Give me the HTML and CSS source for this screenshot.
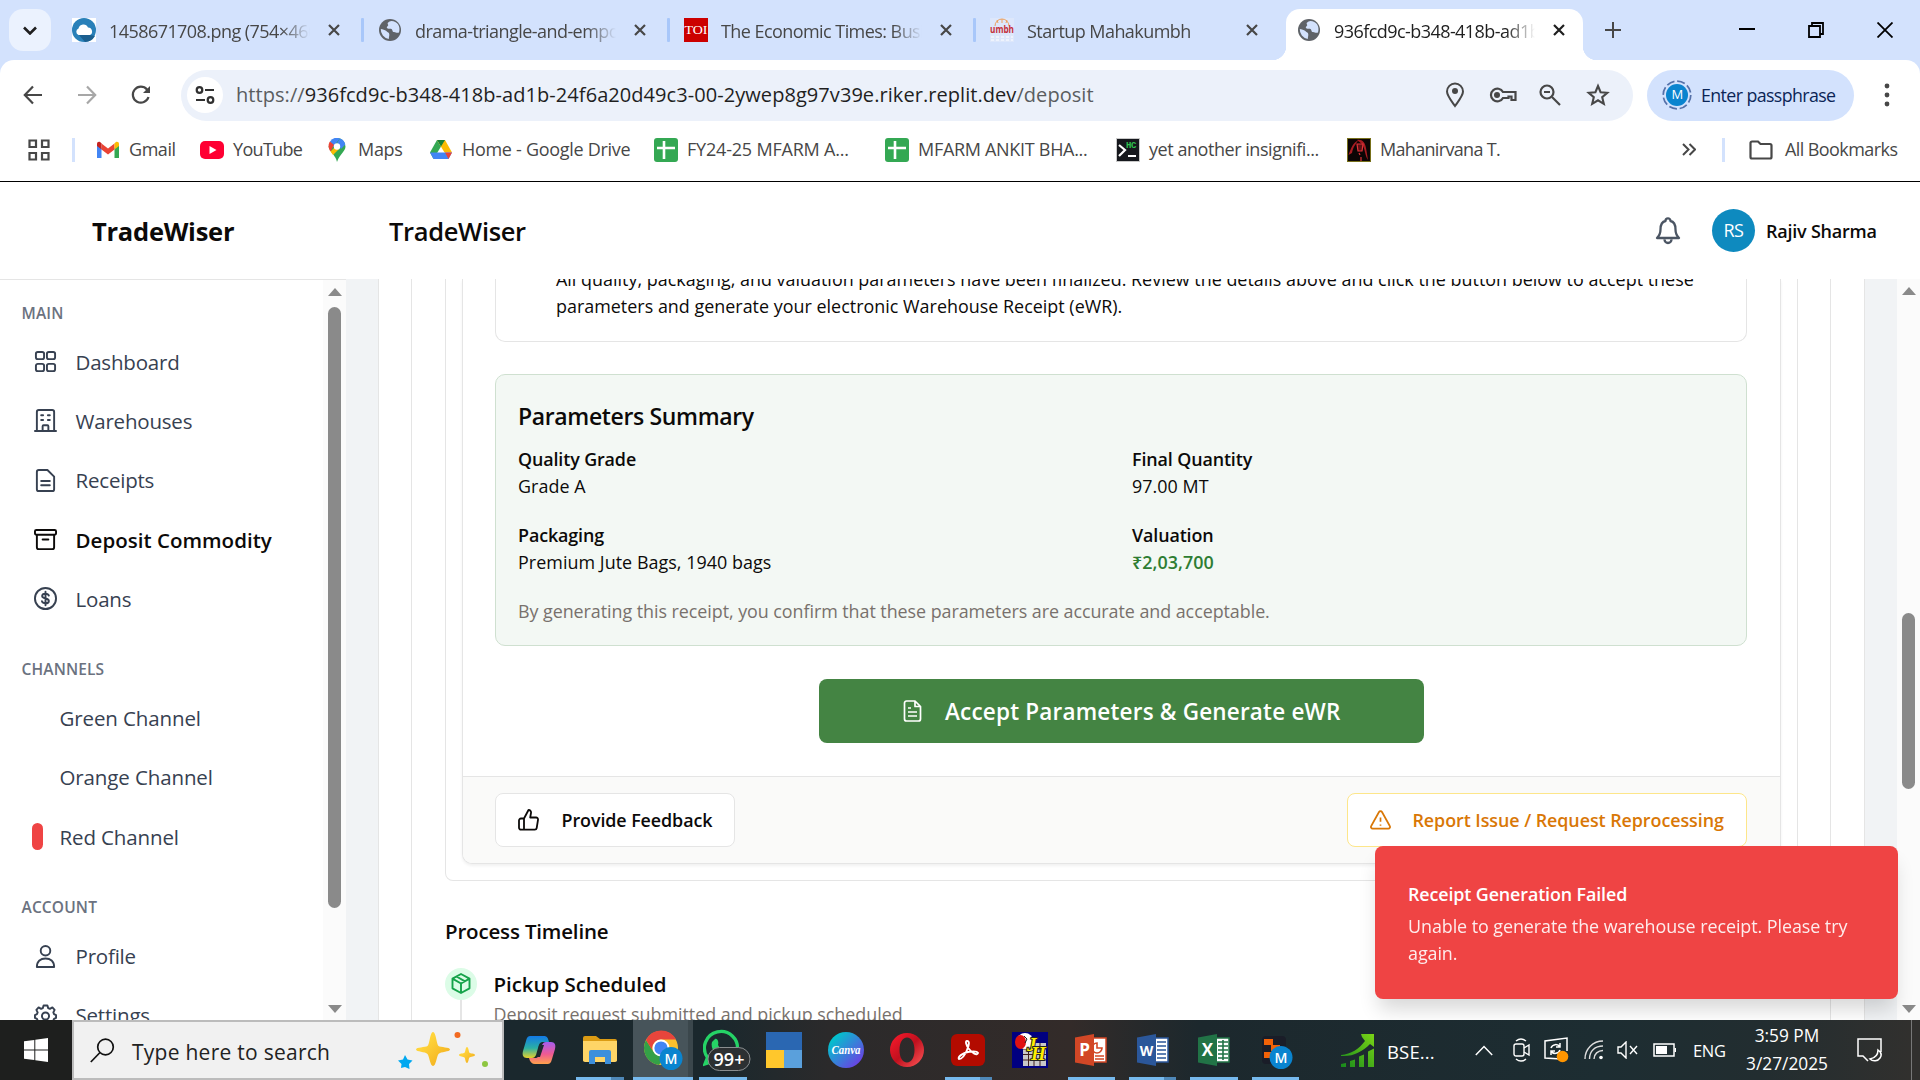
FILE: index.html
```html
<!DOCTYPE html>
<html lang="en">
<head>
<meta charset="utf-8">
<title>TradeWiser</title>
<link rel="stylesheet" href="styles.css">
</head>
<body>
<svg class="defs" width="0" height="0" aria-hidden="true">
  <defs>
    <symbol id="globe" viewBox="0 0 24 24"><circle cx="12" cy="12" r="11" fill="#5f6368"/><path d="M2.800 11c2 .5 4 .5 5.500 2s3 1.500 3 3.500-.5 2.500-.5 4.500A9.500 9.500 0 0 1 2.800 11zM13.500 3c-3 .5-4.500 2-3.500 3.500S8 8.500 9 10s3 0 4.500 1 .5 3 2.500 3 2.500 1.500 5 .5C23 8 19 3 13.500 3z" fill="#d3e2fd"/></symbol>
    <symbol id="x" viewBox="0 0 12 12"><path d="M1 1l10 10M11 1L1 11" stroke="currentColor" stroke-width="2.200" fill="none"/></symbol>
    <symbol id="sheet" viewBox="0 0 24 24"><rect width="24" height="24" rx="3" fill="#34a853"/><path d="M10 3v18M3 10h18" stroke="#fff" stroke-width="2.600"/></symbol>
    <linearGradient id="canvaG" x1="0" y1="0" x2="1" y2="1"><stop offset="0.150" stop-color="#00c4cc"/><stop offset="1" stop-color="#7d2ae8"/></linearGradient>
    <linearGradient id="gold" x1="0" y1="0" x2="1" y2="1"><stop offset="0.300" stop-color="#ffd43a"/><stop offset="1" stop-color="#f0a81a"/></linearGradient>
    <linearGradient id="copA" x1="0" y1="0" x2="0" y2="1"><stop offset="0" stop-color="#1279e6"/><stop offset="0.550" stop-color="#2bb0a4"/><stop offset="1" stop-color="#e8d12a"/></linearGradient>
    <linearGradient id="copB" x1="0" y1="0" x2="0" y2="1"><stop offset="0" stop-color="#a45df0"/><stop offset="0.550" stop-color="#ef5a92"/><stop offset="1" stop-color="#ffa24c"/></linearGradient>
    <linearGradient id="growth" x1="0" y1="1" x2="1" y2="0"><stop offset="0" stop-color="#178a1c"/><stop offset="1" stop-color="#7ad416"/></linearGradient>
    <linearGradient id="operaG" x1="0" y1="0" x2="1" y2="1"><stop offset="0" stop-color="#ff1b2d"/><stop offset="0.500" stop-color="#c0101e"/><stop offset="1" stop-color="#ff5a5a"/></linearGradient>
  </defs>
</svg>

<header class="browser">
  <div class="tabstrip">
    <div class="tab-search"><svg width="14" height="9" viewBox="0 0 14 9"><path d="M1 1.500l6 6 6-6" fill="none" stroke="#1f1f1f" stroke-width="2.600"/></svg></div>
    <div class="tab">
      <svg width="24" height="24" viewBox="0 0 24 24"><rect width="24" height="24" fill="#fff"/><circle cx="12" cy="12" r="12" fill="#2980b9"/><path d="M18 17l5 1a12 12 0 0 1-10 6l-6-7z" fill="#1b5f8f"/><path d="M6.500 17a3.500 3.500 0 0 1 0-6.500 5 5 0 0 1 9.500-1 4 4 0 0 1 2 7.500z" fill="#fff"/></svg>
      <span class="tab-title">1458671708.png (754×460)</span><svg class="tab-x" width="12" height="12"><use href="#x"/></svg>
    </div>
    <div class="tab">
      <svg width="24" height="24"><use href="#globe"/></svg>
      <span class="tab-title">drama-triangle-and-empower</span><svg class="tab-x" width="12" height="12"><use href="#x"/></svg>
    </div>
    <div class="tab">
      <svg width="24" height="24" viewBox="0 0 24 24"><rect width="24" height="24" fill="#c00"/><text x="12" y="16" text-anchor="middle" class="toi" textLength="23" lengthAdjust="spacingAndGlyphs">TOI</text></svg>
      <span class="tab-title">The Economic Times: Business</span><svg class="tab-x" width="12" height="12"><use href="#x"/></svg>
    </div>
    <div class="tab last">
      <svg width="24" height="24" viewBox="0 0 24 24"><rect width="24" height="24" fill="#dde7fb"/><path d="M5 8a7 7 0 0 1 14 0M12 1v4M7 2l1 3M17 2l-1 3" stroke="#eda05e" stroke-width="1" fill="none"/><text x="12" y="15" text-anchor="middle" class="umbh" textLength="24" lengthAdjust="spacingAndGlyphs">umbh</text><path d="M1 19h22M1 22h22" stroke="#fff" stroke-dasharray="3 2"/></svg>
      <span class="tab-title">Startup Mahakumbh</span><svg class="tab-x" width="12" height="12"><use href="#x"/></svg>
    </div>
    <div class="tab active">
      <svg width="24" height="24"><use href="#globe"/></svg>
      <span class="tab-title">936fcd9c-b348-418b-ad1b-24f</span><svg class="tab-x" width="12" height="12"><use href="#x"/></svg>
    </div>
    <svg class="newtab" width="16" height="16" viewBox="0 0 16 16"><path d="M8 0v16M0 8h16" stroke="#474747" stroke-width="2"/></svg>
    <div class="winctl">
      <svg width="16" height="16" viewBox="0 0 16 16"><path d="M0 7h16" stroke="#000" stroke-width="2"/></svg>
      <svg width="16" height="16" viewBox="0 0 16 16"><path d="M1 4h11v11H1zM4 4V1h11v11h-3" fill="none" stroke="#000" stroke-width="1.800"/></svg>
      <svg width="16" height="16" viewBox="0 0 16 16"><path d="M.5.500l15 15M15.500.500l-15 15" stroke="#000" stroke-width="1.800"/></svg>
    </div>
  </div>

  <div class="toolbar">
    <svg class="tb" width="20" height="20" viewBox="0 0 20 20"><path d="M19 10H2M10 1.500L1.800 10l8.200 8.500" fill="none" stroke="#474747" stroke-width="2.200"/></svg>
    <svg class="tb" width="20" height="20" viewBox="0 0 20 20"><path d="M1 10h17M10 1.500l8.200 8.500-8.200 8.500" fill="none" stroke="#a7a7a7" stroke-width="2.200"/></svg>
    <svg class="tb" width="20" height="20" viewBox="0 0 20 20"><path d="M17.500 12A8 8 0 1 1 16 4.500l2 2.500" fill="none" stroke="#474747" stroke-width="2.200"/><path d="M19 1v7h-7z" fill="#474747"/></svg>
    <div class="omnibox">
      <span class="site"><svg width="20" height="20" viewBox="0 0 20 20" fill="none" stroke="#303030" stroke-width="2.200"><circle cx="4.500" cy="5" r="2.800"/><path d="M10 5h9M1 15h9"/><circle cx="15.500" cy="15" r="2.800"/></svg></span>
      <span class="url"><i>https://</i>936fcd9c-b348-418b-ad1b-24f6a20d49c3-00-2ywep8g97v39e.riker.replit.dev<i>/deposit</i></span>
      <div class="omni-icons">
        <svg width="24" height="26" viewBox="0 0 24 26" fill="none" stroke="#474747" stroke-width="2"><path d="M12 24C7 17 4 13.500 4 9.500a8 8 0 0 1 16 0C20 13.500 17 17 12 24z"/><circle cx="12" cy="9" r="3" fill="#474747" stroke="none"/></svg>
        <svg width="28" height="18" viewBox="0 0 28 18" fill="none" stroke="#474747" stroke-width="2.200"><path d="M14 6h12.500v8h-4v-3.500h-3V12H14a6.400 6.400 0 1 1 0-6z"/><circle cx="8" cy="9" r="3" fill="#474747" stroke="none"/></svg>
        <svg width="22" height="22" viewBox="0 0 22 22" fill="none" stroke="#474747" stroke-width="2.200"><circle cx="8" cy="8" r="6.500"/><path d="M13 13l8 8M5 8h6"/></svg>
        <svg class="star" width="24" height="24" viewBox="0 0 24 24" fill="none" stroke="#474747" stroke-width="2.100"><path d="M12 3l2.600 6.200 6.700.6-5.100 4.400 1.600 6.600L12 17.300l-5.800 3.500 1.600-6.600-5.100-4.400 6.700-.6z"/></svg>
      </div>
    </div>
    <div class="profile-chip">
      <svg width="30" height="30" viewBox="0 0 30 30"><circle cx="15" cy="15" r="13.800" fill="none" stroke="#5570a8" stroke-width="1.700" stroke-dasharray="8 2.800"/><circle cx="15" cy="15" r="11" fill="#0a84cf"/><text x="15" y="19" text-anchor="middle" class="m">M</text></svg>
      <span>Enter passphrase</span>
    </div>
    <svg class="menu" width="6" height="24" viewBox="0 0 6 24" fill="#474747"><circle cx="3" cy="3" r="2.400"/><circle cx="3" cy="12" r="2.400"/><circle cx="3" cy="21" r="2.400"/></svg>
  </div>

  <div class="bookmarks">
    <svg width="22" height="22" viewBox="0 0 22 22" fill="none" stroke="#474747" stroke-width="2.200"><path d="M1.500 1.500h6.500v6.500H1.500zM14 1.500h6.500v6.500H14zM1.500 14h6.500v6.500H1.500zM14 14h6.500v6.500H14z"/></svg>
    <span class="sep"></span>
    <div class="bm tight"><svg width="24" height="18" viewBox="0 0 24 18"><path d="M1 3v14h4.500V7z" fill="#4285f4"/><path d="M23 3v14h-4.500V7z" fill="#34a853"/><path d="M5.500 2.500L12 7.500l6.500-5V8.500L12 13.500l-6.500-5z" fill="#ea4335"/><path d="M1 3C1 .5 4 0 5.500 2.500v6L1 5z" fill="#c5221f"/><path d="M23 3c0-2.500-3-3-4.500-.5v6L23 5z" fill="#fbbc04"/></svg><span>Gmail</span></div>
    <div class="bm tighter"><svg width="24" height="18" viewBox="0 0 24 18"><rect width="24" height="18" rx="5" fill="#ff0033"/><path d="M9.500 5l7 4-7 4z" fill="#fff"/></svg><span>YouTube</span></div>
    <div class="bm"><svg width="18" height="24" viewBox="0 0 18 24"><path d="M9 0a8.500 8.500 0 0 1 8.500 8.500c0 5-5.500 7-8.500 15.500C8 18 2 14 .5 8.500z" fill="#34a853"/><path d="M2 3.500A8.500 8.500 0 0 1 12 .5L5 9z" fill="#4285f4"/><path d="M2 3.500L6 7l-3.500 6.500C0 10 0 6 2 3.500z" fill="#ea4335"/><path d="M12 .5c3 1 5 3.500 5.300 6L13 11 9 5z" fill="#4285f4"/><path d="M2.500 13.500L7 9l4 2-6 6z" fill="#fbbc04"/><circle cx="9" cy="8.500" r="3.200" fill="#fff"/></svg><span>Maps</span></div>
    <div class="bm"><svg width="24" height="21" viewBox="0 0 24 21"><path d="M8 1L1 13.500l3.500 6.500L12 7.500z" fill="#34a853"/><path d="M8 1h8l7 12.500h-7.500z" fill="#fbbc04"/><path d="M8 1h8l-4 6.500z" fill="#188038"/><path d="M1 13.500h22L19.500 20h-15z" fill="#4285f4"/><path d="M16 13.500h7L19.500 20z" fill="#ea4335"/></svg><span>Home - Google Drive</span></div>
    <div class="bm fy"><svg width="24" height="24"><use href="#sheet"/></svg><span>FY24-25 MFARM A...</span></div>
    <div class="bm"><svg width="24" height="24"><use href="#sheet"/></svg><span>MFARM ANKIT BHA...</span></div>
    <div class="bm tight"><svg width="24" height="24" viewBox="0 0 24 24"><rect x=".5" y=".5" width="23" height="23" fill="#16181d" stroke="#c9c9c9"/><path d="M3 7l6 5-6 6M12 18h8" fill="none" stroke="#fff" stroke-width="2.200"/><text x="10" y="10" class="hc">HC</text></svg><span>yet another insignifi...</span></div>
    <div class="bm tighter"><svg width="24" height="24" viewBox="0 0 24 24"><rect x=".5" y=".5" width="23" height="23" fill="#0c0505" stroke="#77701a"/><path d="M1.500 17C4 10 6 5 11 2.500 9 6 6 9 5 15zM10 2c5-1 8 2 9 8l2 12c-3-4-3-12-6-16z" fill="#a81c22"/><path d="M10 6h6l-1 7h-4zM12 15l1 2M14 19v4" fill="#5c1114" stroke="#e0343a" stroke-width="1.200"/></svg><span>Mahanirvana T.</span></div>
    <svg class="more" width="14" height="13" viewBox="0 0 14 13"><path d="M1 1l5.500 5.500L1 12M7.500 1L13 6.500 7.500 12" fill="none" stroke="#474747" stroke-width="2"/></svg>
    <span class="sep"></span>
    <div class="bm tighter all"><svg width="24" height="20" viewBox="0 0 24 20"><path d="M1.500 3a1.500 1.500 0 0 1 1.500-1.500h6L11.500 4H21a1.500 1.500 0 0 1 1.500 1.500V17a1.500 1.500 0 0 1-1.500 1.500H3A1.500 1.500 0 0 1 1.500 17z" fill="none" stroke="#474747" stroke-width="2.200"/></svg><span>All Bookmarks</span></div>
  </div>
</header>

<div class="app">
  <aside class="sidebar">
    <div class="brand">TradeWiser</div>
    <div class="side-body">
      <nav class="nav">
        <h3>MAIN</h3>
        <a><svg viewBox="0 0 24 24"><path d="M4 2h4.500a2 2 0 0 1 2 2v3.500a2 2 0 0 1-2 2H4a2 2 0 0 1-2-2V4a2 2 0 0 1 2-2zM15.500 2H20a2 2 0 0 1 2 2v3.500a2 2 0 0 1-2 2h-4.500a2 2 0 0 1-2-2V4a2 2 0 0 1 2-2zM4 14.500h4.500a2 2 0 0 1 2 2V20a2 2 0 0 1-2 2H4a2 2 0 0 1-2-2v-3.500a2 2 0 0 1 2-2zM15.500 14.500H20a2 2 0 0 1 2 2V20a2 2 0 0 1-2 2h-4.500a2 2 0 0 1-2-2v-3.500a2 2 0 0 1 2-2z"/></svg>Dashboard</a>
        <a><svg viewBox="0 0 24 24"><path d="M1 23h22M3 23V3a2 2 0 0 1 2-2h14a2 2 0 0 1 2 2v20M9 23v-5a1 1 0 0 1 1-1h4a1 1 0 0 1 1 1v5M7.500 6.500h2M14.500 6.500h2M7.500 11.500h2M14.500 11.500h2"/></svg>Warehouses</a>
        <a><svg viewBox="0 0 24 24"><path d="M3 3a2 2 0 0 1 2-2h9l7 7v13a2 2 0 0 1-2 2H5a2 2 0 0 1-2-2zM7.500 12.500h9M7.500 17h9"/></svg>Receipts</a>
        <a class="current"><svg viewBox="0 0 24 24"><path d="M2.500 2h19a1.500 1.500 0 0 1 1.500 1.500v2A1.500 1.500 0 0 1 21.500 7h-19A1.500 1.500 0 0 1 1 5.500v-2A1.500 1.500 0 0 1 2.500 2zM3 7v13a2 2 0 0 0 2 2h14a2 2 0 0 0 2-2V7M9 12h6"/></svg>Deposit Commodity</a>
        <a><svg viewBox="0 0 24 24"><circle cx="12" cy="12" r="11"/><path d="M15.500 9c-.5-1.500-1.800-2-3.500-2-2 0-3.500.8-3.500 2.500 0 3.500 7 1.500 7 5 0 1.700-1.500 2.500-3.500 2.500s-3.200-.7-3.700-2.200M12 5v14"/></svg>Loans</a>
        <h3 class="gap">CHANNELS</h3>
        <a class="ch"><b></b>Green Channel</a>
        <a class="ch"><b></b>Orange Channel</a>
        <a class="ch"><b class="red"></b>Red Channel</a>
        <h3 class="gap">ACCOUNT</h3>
        <a><svg viewBox="0 0 24 24"><circle cx="12" cy="6" r="5"/><path d="M3 23c0-6 4-9 9-9s9 3 9 9z"/></svg>Profile</a>
        <a><svg viewBox="0 0 24 24"><path d="M10 1.500h4l.8 2.800 1.800.8 2.600-1.500 2.300 2.500-1.300 2.700.7 1.700 2.100 1v3l-2.100 1-.7 1.700 1.300 2.700-2.300 2.500-2.600-1.500-1.800.8-.8 2.300h-4l-.8-2.300-1.800-.8-2.600 1.500-2.300-2.500 1.300-2.700-.7-1.700-2.100-1v-3l2.100-1 .7-1.700-1.300-2.700 2.300-2.500 2.600 1.500 1.800-.8z"/><circle cx="12" cy="12.500" r="3.700"/></svg>Settings</a>
      </nav>
      <div class="scroll side-scroll"><i class="up"></i><i class="thumb"></i><i class="down"></i></div>
    </div>
  </aside>

  <main class="main">
    <div class="topbar">
      <h1>TradeWiser</h1>
      <svg width="26" height="28" viewBox="0 0 26 28" fill="none" stroke="#4b5563" stroke-width="2.300" stroke-linejoin="round"><path d="M2 21h22c-2.500-2.500-3.500-5-3.500-8.500C20.500 7 18 4.500 15.500 4c0-3.500-5-3.500-5 0C8 4.500 5.500 7 5.500 12.500 5.500 16 4.500 18.500 2 21zM9.500 22.500a3.500 3.500 0 0 0 7 0"/></svg>
      <span class="avatar">RS</span>
      <span class="user">Rajiv Sharma</span>
    </div>
    <div class="content">
      <div class="page">
        <div class="card c1"><div class="card c2">
          <div class="card c3"><div class="card c4">
            <div class="c4-body">
              <div class="alert"><p>All quality, packaging, and valuation parameters have been finalized. Review the details above and click the button below to accept these<br>parameters and generate your electronic Warehouse Receipt (eWR).</p></div>
              <section class="summary">
                <h2>Parameters Summary</h2>
                <dl>
                  <div><dt>Quality Grade</dt><dd>Grade A</dd></div>
                  <div><dt>Final Quantity</dt><dd>97.00 MT</dd></div>
                  <div><dt>Packaging</dt><dd>Premium Jute Bags, 1940 bags</dd></div>
                  <div><dt>Valuation</dt><dd class="money">₹2,03,700</dd></div>
                </dl>
                <p class="note">By generating this receipt, you confirm that these parameters are accurate and acceptable.</p>
              </section>
              <button class="accept"><svg width="19" height="22" viewBox="0 0 19 22" fill="none" stroke="#fff" stroke-width="1.700" stroke-linejoin="round"><path d="M1.500 3a2 2 0 0 1 2-2H12l5.500 5.500V19a2 2 0 0 1-2 2h-12a2 2 0 0 1-2-2zM12 1v5.500h5.500M5 8h3M5 12h9M5 16h9"/></svg><span>Accept Parameters &amp; Generate eWR</span></button>
            </div>
            <footer>
              <button class="btn"><svg width="21" height="22" viewBox="0 0 21 22" fill="none" stroke="#0c0a09" stroke-width="1.800" stroke-linejoin="round"><path d="M6 9.500L10.500 1c2 0 2.800 1.500 2.500 3l-.8 4.500H18a2 2 0 0 1 2 2.300L18.700 19a2 2 0 0 1-2 1.700H3a2 2 0 0 1-2-2v-7.200a2 2 0 0 1 2-2h3zM6 9.500v11.200"/></svg><span>Provide Feedback</span></button>
              <button class="btn warn"><svg width="21" height="20" viewBox="0 0 21 20" fill="none" stroke="#d97706" stroke-width="1.700" stroke-linejoin="round"><path d="M9 2a1.700 1.700 0 0 1 3 0l7.800 14a1.700 1.700 0 0 1-1.500 2.600H2.700A1.700 1.700 0 0 1 1.200 16zM10.500 7.500v4.200M10.500 14.500v1.200"/></svg><span>Report Issue / Request Reprocessing</span></button>
            </footer>
          </div></div>
          <h2 class="tl-head">Process Timeline</h2>
          <div class="tl">
            <div class="tl-rail"><span><svg width="20" height="21" viewBox="0 0 20 21" fill="none" stroke="#16a34a" stroke-width="1.900" stroke-linejoin="round"><path d="M10 1l8.500 4.700v9.600L10 20l-8.500-4.700V5.700zM1.500 5.700L10 10.500l8.500-4.800M10 10.500V20M5.500 3.500L14 8.300"/></svg></span></div>
            <div><h3>Pickup Scheduled</h3><p>Deposit request submitted and pickup scheduled</p></div>
          </div>
        </div></div>
      </div>
      <div class="scroll page-scroll"><i class="up"></i><i class="thumb"></i><i class="down"></i></div>
    </div>
  </main>
</div>

<div class="toast"><strong>Receipt Generation Failed</strong><p>Unable to generate the warehouse receipt. Please try<br>again.</p></div>

<div class="taskbar">
  <div class="start"><svg width="24" height="24" viewBox="0 0 24 24" fill="#fff"><path d="M0 3.300l10.300-1.400v9.600H0zM11.300 1.700L24 0v11.500H11.300zM0 12.500h10.300v9.600L0 20.700zM11.300 12.500H24V24l-12.700-1.700z"/></svg></div>
  <div class="search">
    <svg width="25" height="25" viewBox="0 0 25 25" fill="none" stroke="#111" stroke-width="1.700"><circle cx="15.500" cy="9" r="7.800"/><path d="M10 14.500L.8 24"/></svg>
    <span>Type here to search</span>
    <svg class="stars" width="94" height="44" viewBox="0 0 94 44"><path d="M36 4c3 0 3.500 12.500 5.500 14s11.500 1 11.500 3.500-9.500 2-11.500 4.500S39 38 36 38s-3.500-9.500-5.500-12S19 24 19 21.500s9.500-2 11.500-3.500S33 4 36 4z" fill="url(#gold)"/><path d="M70 19c1.500 0 1.700 5 2.500 5.800S78 25.500 78 27s-4.500 1.500-5.500 2.500S71.500 35 70 35s-1.700-4.500-2.500-5.500S62 28.500 62 27s4.500-1.400 5.500-2.200S68.500 19 70 19z" fill="url(#gold)"/><path d="M8 27l2.500 4.500 5 1-3.500 3.500.5 5-4.500-2-4 1 .5-4L1 32.500l5-1z" fill="#00a8f0"/><circle cx="60.500" cy="7" r="3" fill="#f26a21"/><circle cx="88" cy="36" r="3" fill="#8ec641"/></svg>
  </div>
  <div class="apps">
    <div class="ti"><svg width="34" height="32" viewBox="0 0 34 32"><path d="M9 2h13c3 0 4 2 5 6h-6c-3 0-4 2-5 6l-2 7c-1 2-2 3-4 3H5c-4 0-5-3-4-7L4 7c1-4 2-5 5-5z" fill="url(#copA)"/><path d="M25 30H13c-3 0-5-2-6-6h6c3 0 4-2 5-6l2-7c1-2 2-3 4-3h5c4 0 5 3 4 7l-3 10c-1 4-2 5-5 5z" fill="url(#copB)"/><path d="M18 11h4l-4 12h-3z" fill="#1c2a2f"/></svg></div>
    <div class="ti run multi"><svg width="34" height="28" viewBox="0 0 34 28"><path d="M0 2a2 2 0 0 1 2-2h11l4 3h15a2 2 0 0 1 2 2v20H0z" fill="#dc9c14"/><path d="M0 5h34v19a2 2 0 0 1-2 2H2a2 2 0 0 1-2-2z" fill="#ffd567"/><path d="M6 28V16a2 2 0 0 1 2-2h18a2 2 0 0 1 2 2v12h-6v-7H12v7z" fill="#3d8fdb"/></svg></div>
    <div class="ti run focus"><svg width="40" height="40" viewBox="0 0 40 40"><circle cx="18" cy="18" r="17" fill="#fbc02d"/><path d="M3 10a17 17 0 0 0 13 25l7-11a9 9 0 0 1-13-3z" fill="#34a047"/><path d="M3 10a17 17 0 0 1 15-9.500A17 17 0 0 1 33 9.500H18a9 9 0 0 0-8.500 11z" fill="#e8453c"/><circle cx="18" cy="18" r="8.500" fill="#fff"/><circle cx="18" cy="18" r="6.600" fill="#4285f4"/><circle cx="28" cy="28.500" r="11.500" fill="#0a84cf"/><text x="28" y="33.500" text-anchor="middle" class="m big">M</text></svg></div>
    <div class="ti run wa"><svg width="48" height="42" viewBox="0 0 48 42"><path d="M4.500 28.500L2 35l7-2.200A16.500 16.500 0 1 0 4.500 28.500z" fill="#1b2a2e" stroke="#25d366" stroke-width="3.300"/><path d="M12 10c3-1 4 4 3 6 2 4 5 6 8 7 5 0 3 6-2 6-8-1-14-10-12-16z" fill="#25d366"/><rect x="5" y="18.500" width="42" height="23" rx="11.500" fill="#2c3032" stroke="#8a8e90"/><text x="26" y="36.500" text-anchor="middle" class="badge">99+</text></svg></div>
    <div class="ti"><svg width="36" height="36" viewBox="0 0 36 36"><path d="M0 0h36v18H0z" fill="#2a67b2"/><path d="M0 18h18v18H0z" fill="#ffc72c"/><path d="M18 18h18v18H18z" fill="#5aa0dc"/></svg></div>
    <div class="ti"><svg width="36" height="36" viewBox="0 0 36 36"><circle cx="18" cy="18" r="18" fill="url(#canvaG)"/><text x="18" y="22" text-anchor="middle" class="canva" textLength="29" lengthAdjust="spacingAndGlyphs">Canva</text></svg></div>
    <div class="ti"><svg width="34" height="34" viewBox="0 0 34 34"><path d="M17 0a17 17 0 0 1 0 34 17 17 0 0 1 0-34zm0 4.500c-4.500 0-7.500 5-7.500 12.500s3 12.500 7.500 12.500 7.500-5 7.500-12.500S21.500 4.500 17 4.500z" fill="url(#operaG)" fill-rule="evenodd"/></svg></div>
    <div class="ti run multi"><svg width="34" height="32" viewBox="0 0 34 32"><rect width="34" height="32" rx="6" fill="#b30b00"/><path d="M16 7c3 0 2 4 0 9s-5 9-8 9c-2-2 4-6 9-7s9-1 10 1c-1 3-6 0-9-4s-4-8-2-8z" fill="none" stroke="#fff" stroke-width="1.900"/></svg></div>
    <div class="ti"><svg width="36" height="36" viewBox="0 0 36 36"><rect width="36" height="36" fill="#000080"/><path d="M11 11h23v23H11z" fill="#c8c8c8"/><path d="M11 17h23M11 22.500h23M11 28h23M16.500 11v23M22 11v23M28 11v23" stroke="#402020"/><circle cx="13" cy="9" r="8" fill="#fff"/><ellipse cx="8.500" cy="10" rx="5.500" ry="7" fill="#e01212"/><path d="M12 4l3 3-2 4" fill="none" stroke="#222"/><text x="15" y="19" class="jh">J</text><text x="19" y="28" class="jh">H</text></svg></div>
    <div class="ti run"><svg width="32" height="32" viewBox="0 0 32 32"><path d="M18 4h13v24H18z" fill="#fff" stroke="#d24726" stroke-width="1.500"/><path d="M22 9a5 5 0 1 0 5 5h-5zM20 22h9M20 25h9" stroke="#d24726" stroke-width="1.600" fill="none"/><path d="M0 3.500L19 0v32L0 28.500z" fill="#d24726"/><text x="9.500" y="22" text-anchor="middle" class="off">P</text></svg></div>
    <div class="ti run multi"><svg width="32" height="32" viewBox="0 0 32 32"><path d="M18 4h13v24H18z" fill="#fff" stroke="#2b579a" stroke-width="1.500"/><path d="M20 8h9M20 12h9M20 16h9M20 20h9M20 24h9" stroke="#2b579a" stroke-width="1.600"/><path d="M0 3.500L19 0v32L0 28.500z" fill="#2b579a"/><text x="9.500" y="22" text-anchor="middle" class="off w">W</text></svg></div>
    <div class="ti run"><svg width="32" height="32" viewBox="0 0 32 32"><path d="M18 4h13v24H18z" fill="#fff" stroke="#217346" stroke-width="1.500"/><path d="M20 8h10M20 12h10M20 16h10M20 20h10M20 24h10M25 6v20" stroke="#217346" stroke-width="1.600"/><path d="M0 3.500L19 0v32L0 28.500z" fill="#217346"/><text x="9.500" y="22" text-anchor="middle" class="off">X</text></svg></div>
    <div class="ti run rep"><svg width="34" height="40" viewBox="0 0 34 40"><rect width="24" height="28" x="2" y="6" rx="4" fill="#1a1d28"/><path d="M4 9h9v6H4zM11 15h9v6h-9zM4 22h9v6H4z" fill="#f26207"/><circle cx="21" cy="27.500" r="11.500" fill="#0a84cf"/><text x="21" y="32.500" text-anchor="middle" class="m big">M</text></svg></div>
  </div>
  <div class="tray">
    <svg width="34" height="34" viewBox="0 0 34 34" fill="url(#growth)"><path d="M0 34v-3l5-1v4zM9 34v-6l5-1.500V34zM18 34V23.500l5-2V34zM27 34V18.500l6-3V34zM0 22c10-1 18-6 24-14l-3-4-1-3h13v13l-4-3C22 18 12 24 0 23z"/></svg>
    <span class="bse">BSE...</span>
    <svg width="18" height="11" viewBox="0 0 18 11" fill="none" stroke="#fff" stroke-width="1.500"><path d="M.8 10L9 1.500 17.200 10"/></svg>
    <svg width="17" height="24" viewBox="0 0 17 24" fill="none" stroke="#fff" stroke-width="1.400"><rect x="1" y="6" width="10" height="12" rx="2"/><path d="M11 10l5-3v10l-5-3M3 3c3-2.500 7-2.500 10 0M3 21c3 2.500 7 2.500 10 0"/></svg>
    <svg width="25" height="26" viewBox="0 0 25 26" fill="none" stroke="#fff" stroke-width="1.500"><path d="M17 22L1 21V4l22-3v13M7 11a5 5 0 0 1 9-1M16 6v4h-4M16 13a5 5 0 0 1-9 1M7 18v-4h4"/><circle cx="18.500" cy="19.500" r="5.800" fill="#ff9500" stroke="none"/></svg>
    <svg width="20" height="20" viewBox="0 0 20 20" fill="none" stroke="#ddd" stroke-width="1.400"><path d="M1 19C1 9 9 1 19 1M5.500 19C5.500 11 11 6 19 6M10 19c0-5 4-8.500 9-8.500"/><circle cx="17" cy="17.500" r="1.800" fill="#fff" stroke="none"/></svg>
    <svg width="21" height="18" viewBox="0 0 21 18" fill="none" stroke="#fff" stroke-width="1.400"><path d="M1 6h3l5-5v16l-5-5H1zM13 5l7 8M20 5l-7 8"/></svg>
    <svg width="23" height="14" viewBox="0 0 23 14" fill="none" stroke="#fff" stroke-width="1.500"><rect x="1" y="1" width="20" height="12"/><path d="M3 3h11v8H3z" fill="#fff" stroke="none"/><path d="M22.300 5v4"/></svg>
    <span class="eng">ENG</span>
    <span class="clock">3:59 PM<br>3/27/2025</span>
    <svg width="25" height="25" viewBox="0 0 25 25" fill="none" stroke="#fff" stroke-width="1.500"><path d="M11 23l-5-5H1V1h23v13M21 12c0 5-3 8-8 9 3 3 8 2 10-1 2-3 1-6-2-8z"/></svg>
    <i class="peek"></i>
  </div>
</div>
</body>
</html>
```
FILE: styles.css
```css
* { box-sizing: border-box; }
html, body { margin: 0; width: 1920px; height: 1080px; overflow: hidden; }
body {
  font-family: "Open Sans", "Noto Sans", sans-serif;
  color: #0c0a09;
  background: #fff;
  display: flex;
  flex-direction: column;
}
h1, h2, h3, p, dl, dd { margin: 0; }
svg { display: block; flex: none; }
span { white-space: nowrap; }
.defs { position: absolute; }
button { font: inherit; color: inherit; }

/* browser window */
.browser { height: 182px; flex: none; background: #d3e2fd; border-bottom: 1px solid #000; box-shadow: inset 0 -1px #c9c9c9; }
.tabstrip { height: 60px; display: flex; align-items: center; padding-left: 9px; }
.tab-search { width: 42px; height: 42px; border-radius: 14px; background: #ebf2fe; display: flex; align-items: center; justify-content: center; margin-right: 7px; }
.tab { width: 306px; height: 42px; padding-left: 14px; display: flex; align-items: center; position: relative; color: #474747; }
.tab::after { content: ""; position: absolute; right: 0; top: 9px; width: 3px; height: 24px; background: #a8c7fa; border-radius: 1px; }
.tab.last::after, .tab.active::after { display: none; }
.tab-title { width: 201px; margin-left: 13px; padding-top: 2px; overflow: hidden; font-size: 18px; letter-spacing: -0.560px; -webkit-mask-image: linear-gradient(90deg, #000 172px, transparent 201px); mask-image: linear-gradient(90deg, #000 172px, transparent 201px); }
.tab-x { margin-left: 18px; }
.tab.active { width: 297px; margin: 9px 0 0 4px; height: 51px; padding: 0 0 9px 11px; background: #fff; border-radius: 14px 14px 0 0; color: #1f1f1f; }
.tab.active::before { content: ""; position: absolute; left: -14px; right: -14px; bottom: 0; height: 14px; background: radial-gradient(circle at 0 0, transparent 14px, #fff 14.500px) left/14px 14px no-repeat, radial-gradient(circle at 100% 0, transparent 14px, #fff 14.500px) right/14px 14px no-repeat; }
.newtab { margin-left: 22px; }
.winctl { margin: 0 27px 0 auto; display: flex; gap: 53px; }
.toi { font: 13px "Liberation Serif", serif; fill: #fff; }
.umbh { font: bold 10px "Open Sans", sans-serif; fill: #c5303a; }
.hc { font: bold 9px "Liberation Mono", monospace; fill: #2fc04f; }
.m { font: 13px "Open Sans", sans-serif; fill: #fff; }
.m.big { font-size: 14px; font-weight: 600; }

.toolbar { height: 67px; background: #fff; border-radius: 14px 14px 0 0; display: flex; align-items: center; padding: 3px 30px 0 23px; }
.tb { margin-right: 34px; }
.tb:nth-child(3) { margin-right: 30px; }
.omnibox { width: 1452px; height: 51px; border-radius: 26px; background: #ecf1fa; display: flex; align-items: center; padding: 0 23px 0 6px; }
.site { width: 36px; height: 36px; border-radius: 50%; background: #fff; display: flex; align-items: center; justify-content: center; }
.url { margin: 0 0 2px 13px; font-size: 20px; letter-spacing: 0.060px; color: #1f1f1f; }
.url i { font-style: normal; color: #5a5d60; }
.omni-icons { margin-left: auto; display: flex; align-items: center; gap: 22px; }
.star { margin-left: 3px; }
.profile-chip { margin-left: 14px; width: 207px; height: 51px; border-radius: 26px; background: #d3e2fd; display: flex; align-items: center; padding-left: 15px; gap: 9px; font-size: 17.800px; letter-spacing: -0.600px; color: #0b2556; }
.menu { margin-left: 30px; }

.bookmarks { height: 54px; background: #fff; display: grid; align-items: center; padding: 0 0 9px 28px;
  grid-template-columns: 44px 24px 104px 128px 101px 225px 231px 231px 231px 335px 40px 27px 170px; color: #474747; font-size: 18px; letter-spacing: -0.300px; }
.bm { display: flex; align-items: center; gap: 9px; }
.bm span { margin-bottom: 1px; }
.bm:nth-child(5) { gap: 12px; }
.tight { letter-spacing: -0.450px; }
.tighter { letter-spacing: -0.680px; }
.fy { letter-spacing: -0.200px; }
.all { gap: 12px; letter-spacing: -0.580px; }
.sep { width: 3px; height: 24px; background: #d3e2fd; }

/* application shell */
.app { height: 838px; flex: none; display: flex; }
.sidebar { width: 346px; display: flex; flex-direction: column; }
.brand { height: 98px; border-bottom: 1px solid #e5e5e5; padding-left: 92px; line-height: 98px; font-size: 25.500px; font-weight: 700; letter-spacing: -0.250px; }
.side-body { flex: 1; display: flex; overflow: hidden; min-height: 0; }
.nav { width: 323px; padding: 19px 0 0 21.500px; color: #374151; }
.nav h3 { height: 28px; line-height: 28px; font-size: 15.500px; font-weight: 600; color: #6b7280; letter-spacing: 0.150px; margin-bottom: 5px; }
.nav h3.gap { margin-top: 27px; }
.nav a { height: 59.300px; display: flex; align-items: center; gap: 19px; padding-left: 12px; font-size: 20.500px; letter-spacing: -0.200px; }
.nav a svg { width: 23px; height: 23px; fill: none; stroke: currentColor; stroke-width: 2; stroke-linecap: round; stroke-linejoin: round; }
.nav a.current { color: #0c0a09; font-weight: 600; letter-spacing: 0.020px; }
.nav a.ch { padding-left: 10px; gap: 17px; letter-spacing: -0.120px; }
.nav b { width: 11px; height: 27px; border-radius: 6px; }
.nav b.red { background: #ef4444; }

.scroll { background: #fbfbfb; display: flex; flex-direction: column; align-items: center; width: 23px; padding: 8px 0 7px; }
.scroll i { display: block; flex: none; }
.up, .down { border: 7.500px solid transparent; border-top-width: 0; border-bottom: 8px solid #8a8a8a; width: 0; }
.down { border-bottom: 0; border-top: 8px solid #8a8a8a; margin-top: auto; }
.thumb { width: 13px; border-radius: 7px; background: #8a8a8a; }
.side-scroll .thumb { height: 601px; margin-top: 11px; }
.page-scroll .thumb { height: 176px; margin-top: 318px; }

.main { width: 1574px; display: flex; flex-direction: column; }
.topbar { height: 97px; display: flex; align-items: center; padding: 0 0 0 43px; flex: none; }
.topbar h1 { flex: 1; font-size: 25.500px; font-weight: 600; letter-spacing: -0.330px; }
.avatar { width: 43px; height: 43px; border-radius: 50%; background: #0e8abf; color: #fff; font-size: 18px; line-height: 43px; text-align: center; margin: 0 11px 0 31px; letter-spacing: -0.500px; }
.user { width: 154px; font-size: 18px; font-weight: 600; letter-spacing: -0.230px; }
.content { flex: 1; display: flex; background: #f1f3f5; overflow: hidden; min-height: 0; }
.page { width: 1551px; padding: 0 32px; }
.card { background: #fff; border: 1px solid #e5e5e5; border-top: 0; }
.c1 { height: 760px; padding: 0 33px 0 32px; }
.c2 { height: 760px; padding: 0 32.500px 0 33px; }
.c3 { height: 601.500px; padding: 0 16px; border-radius: 0 0 8px 8px; }
.c4 { height: 585px; border-radius: 0 0 10px 10px; box-shadow: 0 2px 3px rgba(0,0,0,.06); overflow: hidden; }
.c4-body { height: 497px; padding: 0 33px 0 32px; }
.alert { height: 63px; border: 1px solid #e5e5e5; border-top: 0; border-radius: 0 0 10px 10px; padding-left: 60px; overflow: hidden; }
.alert p { margin-top: -13.500px; font-size: 17.900px; line-height: 27px; letter-spacing: 0.020px; white-space: nowrap; }
.summary { margin-top: 32px; height: 272px; border: 1px solid #cfe0d0; border-radius: 10px; background: #f3f8f4; padding: 21px 22px 22px; }
.summary h2 { font-size: 23px; line-height: 40px; font-weight: 600; letter-spacing: -0.350px; }
.summary dl { margin-top: 10px; display: grid; grid-template-columns: 614px 1fr; row-gap: 22px; }
.summary dt, .summary dd { font-size: 17.900px; line-height: 27px; letter-spacing: 0.050px; }
.summary dt { letter-spacing: -0.120px; }
.summary dt, .money { font-weight: 600; }
.money { color: #2e7d32; }
.note { font-size: 17.900px; line-height: 27px; letter-spacing: -0.050px; color: #78716c; margin-top: 22px; }
.accept { display: flex; align-items: center; width: 605px; height: 64px; margin: 33px 0 0 324px; padding: 0 0 0 84px; border: 0; border-radius: 8px; background: #448443; color: #fff; font-size: 22.500px; font-weight: 600; letter-spacing: 0.190px; gap: 23px; }
.c4 footer { height: 87px; border-top: 1px solid #e5e5e5; background: #fafaf9; padding: 16px 33px 0 32px; display: flex; justify-content: space-between; }
.btn { height: 54px; width: 240px; border: 1px solid #e5e5e5; border-radius: 8px; background: #fff; display: flex; align-items: center; gap: 22.500px; padding: 0 0 0 22px; font-size: 17.900px; font-weight: 600; letter-spacing: -0.080px; }
.btn.warn { width: 400px; border-color: #fde68a; color: #d97706; gap: 22px; letter-spacing: -0.060px; }
.tl-head { margin-top: 34px; font-size: 20.500px; line-height: 32px; font-weight: 600; letter-spacing: -0.170px; }
.tl { display: flex; margin-top: 21px; }
.tl-rail { width: 48.500px; height: 120px; background: linear-gradient(#e5e5e5, #e5e5e5) 15px 0 / 2px 100% no-repeat; }
.tl-rail span { width: 32px; height: 32px; border-radius: 50%; background: #dcfce7; display: flex; align-items: center; justify-content: center; }
.tl h3 { font-size: 20.500px; line-height: 33px; font-weight: 600; letter-spacing: -0.050px; }
.tl p { font-size: 17.900px; line-height: 27px; color: #78716c; letter-spacing: -0.010px; }

/* notification */
.toast { position: absolute; left: 1375px; top: 846px; width: 523px; height: 153px; border-radius: 8px; background: #ef4444; color: #fff; padding: 35px 33px; box-shadow: 0 14px 20px -4px rgba(0,0,0,.16); font-size: 17.900px; line-height: 27px; letter-spacing: -0.060px; }
.toast strong { display: block; font-weight: 600; margin-bottom: 5px; letter-spacing: -0.120px; }
.toast p { opacity: .9; white-space: nowrap; }

/* taskbar */
.taskbar { height: 60px; flex: none; position: relative; display: flex; align-items: center; background: linear-gradient(90deg, #1e1f1e 0 72px, #1a282d 504px, #1b282d 720px, #2b2a2b 830px, #332b29 1070px, #1c282d 1200px, #1d2d32 1600px, #222d30 1760px, #31302e 1910px); color: #fff; }
.start { width: 72px; display: flex; justify-content: center; }
.search { width: 432px; height: 60px; background: #f1f1f1; border: 2px solid #bcbcbc; display: flex; align-items: center; padding-left: 16px; color: #222; font-size: 21px; letter-spacing: 0.260px; }
.search span { margin: 3px 0 0 17px; width: 265px; }
.apps { width: 799px; margin-left: 4px; display: grid; grid-template-columns: repeat(13, 61.400px); height: 60px; }
.ti { display: flex; align-items: center; justify-content: center; position: relative; }
.run::after { content: ""; position: absolute; left: 7px; right: 7px; bottom: 0; height: 3px; background: #76b9ed; }
.run.multi::after { background: linear-gradient(90deg, #76b9ed 35px, #4f88b8 35px); }
.focus { background: linear-gradient(90deg, #47545a 55px, #3b474c 55px); margin-left: 2px; margin-right: -1px; }
.focus::after { left: 0; right: 0; }
.wa { padding-left: 8px; }
.badge { font: 600 18px "Open Sans", sans-serif; fill: #fff; }
.canva { font: italic bold 12px "Liberation Serif", serif; fill: #fff; }
.jh { font: italic bold 19px "Liberation Serif", serif; fill: #ffee00; stroke: #222; stroke-width: 2px; paint-order: stroke; }
.off { font: bold 17px "Open Sans", sans-serif; fill: #fff; }
.off.w { font-size: 14px; }
.rep { padding-left: 3px; }
.tray { display: grid; align-items: center; margin-left: 34px; grid-template-columns: 46px 88px 38px 31px 40px 33px 36px 40px 50px 114px 54px 3px; font-size: 18px; }
.tray svg { justify-self: start; }
.bse { font-size: 18.500px; letter-spacing: 0.150px; padding-top: 2px; }
.eng { font-size: 16.500px; letter-spacing: -0.300px; }
.clock { font-size: 17.300px; line-height: 28px; text-align: center; width: 88px; letter-spacing: 0; }
.tray > .clock { justify-self: start; }
.peek { width: 1px; height: 60px; background: #777; }
```
